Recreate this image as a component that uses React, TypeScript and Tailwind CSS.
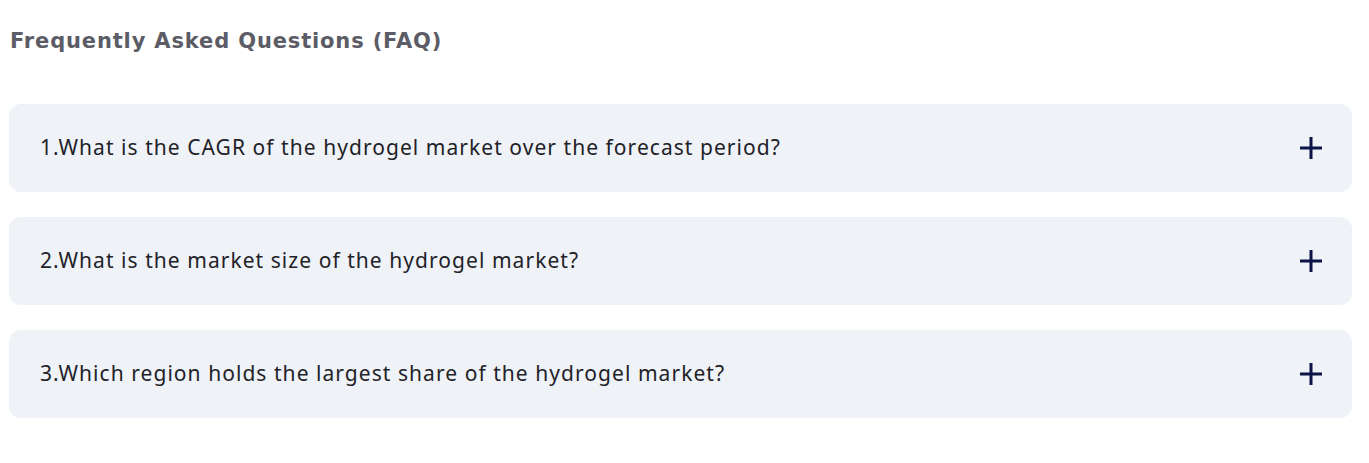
import React from "react";

const items = [
  "1.What is the CAGR of the hydrogel market over the forecast period?",
  "2.What is the market size of the hydrogel market?",
  "3.Which region holds the largest share of the hydrogel market?",
];

function Plus() {
  return (
    <svg width="22" height="22" viewBox="0 0 22 22" className="shrink-0">
      <rect x="0" y="9.5" width="22" height="3" fill="#0d1448" />
      <rect x="9.5" y="0" width="3" height="22" fill="#0d1448" />
    </svg>
  );
}

export default function App() {
  return (
    <div className="w-[1369px] h-[463px] bg-white pl-[9px] pr-[17px] pt-[27px]">
      <h2
        className="text-[21px] leading-[28px] font-bold text-[#5c5c66] pl-[1px] mb-[49px] tracking-[0.85px]"
        style={{ fontFamily: '"DejaVu Sans", sans-serif' }}
      >
        Frequently Asked Questions (FAQ)
      </h2>
      <div className="flex flex-col gap-[25px]">
        {items.map((q) => (
          <div
            key={q}
            className="h-[88px] rounded-[12px] bg-[#eff2f7] flex items-center justify-between pl-[31px] pr-[30px]"
          >
            <span
              className="text-[21px] tracking-[1.05px] text-[#222228]"
              style={{ fontFamily: '"Noto Sans", sans-serif' }}
            >
              {q}
            </span>
            <Plus />
          </div>
        ))}
      </div>
    </div>
  );
}
